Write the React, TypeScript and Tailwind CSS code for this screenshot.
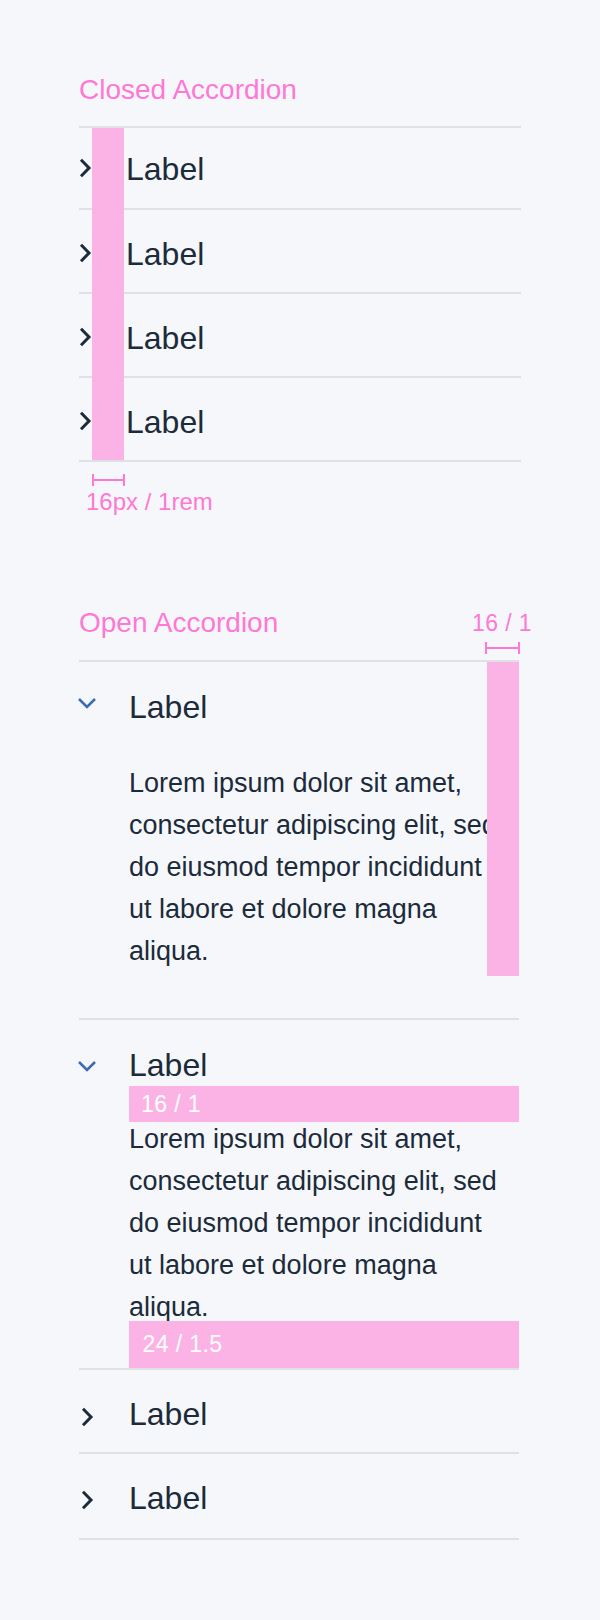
import React from "react";

const PINK = "text-[#ff78d5]";

function ChevronRight() {
  return (
    <svg width="13" height="20" viewBox="0 0 13 20" fill="none" className="block shrink-0">
      <polyline points="2,1.8 10,10 2,18.2" stroke="#1c2b39" strokeWidth="3" strokeLinejoin="miter" strokeLinecap="butt" />
    </svg>
  );
}

function ChevronDown() {
  return (
    <svg width="20" height="12" viewBox="0 0 20 12" fill="none" className="block shrink-0">
      <polyline points="2,2 10,10 18,2" stroke="#3a6cb4" strokeWidth="2.5" strokeLinejoin="miter" />
    </svg>
  );
}

function Bracket({ w }: { w: string }) {
  return (
    <div className={`flex h-[12px] items-center border-x-2 border-[#ff78d5] ${w}`}>
      <div className="h-[2px] w-full bg-[#ff78d5]" />
    </div>
  );
}

const LOREM =
  "Lorem ipsum dolor sit amet, consectetur adipiscing elit, sed do eiusmod tempor incididunt ut labore et dolore magna aliqua.";

export default function App() {
  return (
    <div className="min-h-[1620px] w-[600px] bg-[#f5f7fb] pl-[79px] pt-[76px] font-['Liberation_Sans',Arial,Helvetica,sans-serif] text-[#1c2b39]">
      {/* Closed Accordion */}
      <section className="w-[442px]">
        <h2 className={`text-[28px] leading-[28px] ${PINK}`}>Closed Accordion</h2>
        <div className="relative mt-[22px] border-t-2 border-[#dfe1e6]">
          {[0, 1, 2, 3].map((i) => (
            <div
              key={i}
              className={
                i === 0
                  ? "flex h-[82px] items-start border-b-2 border-[#dfe1e6] pt-[25px]"
                  : "flex h-[84px] items-start border-b-2 border-[#dfe1e6] pt-[28px]"
              }
            >
              <div className="w-[13px] pt-[5px]">
                <ChevronRight />
              </div>
              <span className="ml-[34px] text-[32px] leading-[32px]">Label</span>
            </div>
          ))}
          <div className="absolute left-[13px] top-0 h-[332px] w-[32px] bg-[#fbb3e6]" />
        </div>
        <div className="ml-[12.5px] mt-[12.3px]">
          <Bracket w="w-[33px]" />
        </div>
        <p className={`ml-[7px] mt-[3.3px] text-[24px] leading-[24px] ${PINK}`}>16px / 1rem</p>
      </section>

      {/* Open Accordion */}
      <section className="relative mt-[95.4px] w-[440px]">
        <h2 className={`text-[28px] leading-[28px] ${PINK}`}>Open Accordion</h2>
        <span className={`absolute left-[393px] top-[3px] whitespace-nowrap text-[23px] leading-[22px] tracking-[0.4px] ${PINK}`}>
          16 / 1
        </span>
        <div className="absolute left-[406px] top-[32.7px]">
          <Bracket w="w-[35px]" />
        </div>

        <div className="relative mt-[23px] border-t-2 border-[#dfe1e6]">
          {/* Item 1 */}
          <div className="border-b-2 border-[#dfe1e6] pb-[46px] pt-[29.5px]">
            <div className="flex items-start">
              <div className="flex w-[16px] justify-center pt-[5.5px]">
                <ChevronDown />
              </div>
              <span className="ml-[34px] text-[32px] leading-[32px]">Label</span>
            </div>
            <p className="ml-[50px] mt-[38.5px] w-[375px] text-[27px] leading-[42px]">{LOREM}</p>
          </div>

          {/* Item 2 */}
          <div className="border-b-2 border-[#dfe1e6] pt-[29.5px]">
            <div className="flex items-start">
              <div className="flex w-[16px] justify-center pt-[10.5px]">
                <ChevronDown />
              </div>
              <span className="ml-[34px] text-[32px] leading-[32px]">Label</span>
            </div>
            <div className="relative ml-[50px] mt-[4.5px] flex h-[36px] items-center bg-[#fbb3e6] pl-[12px] text-[23px] leading-[22px] tracking-[0.4px] text-white">
              16 / 1
            </div>
            <p className="ml-[50px] mt-[-4px] w-[375px] text-[27px] leading-[42px]">{LOREM}</p>
            <div className="relative ml-[50px] mt-[-7px] flex h-[47px] items-center bg-[#fbb3e6] pl-[13.6px] text-[23px] leading-[22px] tracking-[0.4px] text-white">
              24 / 1.5
            </div>
          </div>

          {/* Item 3 */}
          <div className="flex h-[84px] items-start border-b-2 border-[#dfe1e6] pt-[28px]">
            <div className="flex w-[16px] justify-center pt-[9px]">
              <ChevronRight />
            </div>
            <span className="ml-[34px] text-[32px] leading-[32px]">Label</span>
          </div>

          {/* Item 4 */}
          <div className="flex h-[86px] items-start border-b-2 border-[#dfe1e6] pt-[28px]">
            <div className="flex w-[16px] justify-center pt-[8px]">
              <ChevronRight />
            </div>
            <span className="ml-[34px] text-[32px] leading-[32px]">Label</span>
          </div>

          <div className="absolute right-0 top-0 h-[314px] w-[32px] bg-[#fbb3e6]" />
        </div>
      </section>
    </div>
  );
}
